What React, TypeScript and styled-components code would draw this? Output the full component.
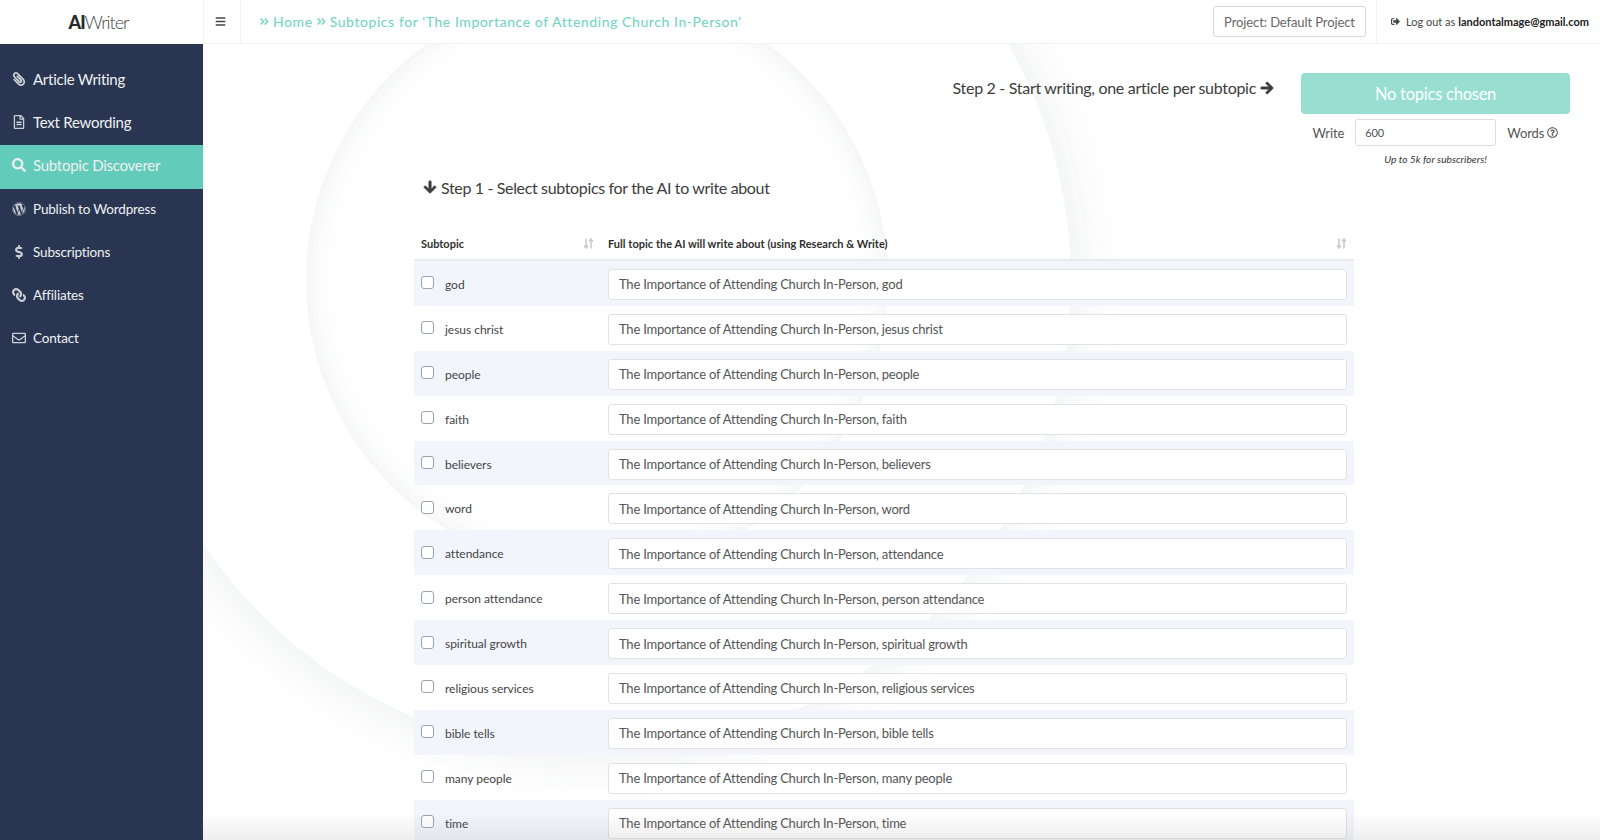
import React from "react";
import styled, { createGlobalStyle } from "styled-components";
import {
  FaPaperclip,
  FaRegFileAlt,
  FaSearch,
  FaWordpress,
  FaDollarSign,
  FaLink,
  FaRegEnvelope,
  FaBars,
  FaAngleDoubleRight,
  FaSignOutAlt,
  FaArrowRight,
  FaArrowDown,
  FaRegQuestionCircle,
} from "react-icons/fa";

const GlobalStyle = createGlobalStyle`
  html, body {
    margin: 0;
    height: 840px;
    overflow: hidden;
    background: #fff;
    font-family: Lato, "Liberation Sans", sans-serif;
    color: #3c3c3c;
  }
  * { box-sizing: border-box; }
`;

const Page = styled.div`
  position: relative;
  width: 1600px;
  height: 840px;
  overflow: hidden;
  display: grid;
  grid-template-columns: 203px 1fr;
  grid-template-rows: 44px 1fr;
`;

const Logo = styled.div`
  display: flex;
  align-items: center;
  justify-content: center;
  padding-right: 6px;
  background: #fff;
  font-size: 18px;
  letter-spacing: -1px;
  color: #444;
  font-weight: 300;
  b {
    font-weight: 900;
    color: #2b2b2b;
  }
`;

const TopBar = styled.header`
  position: relative;
  z-index: 2;
  display: flex;
  align-items: stretch;
  background: #fff;
  border-bottom: 1px solid #f1f2f3;
  border-left: 1px solid #f1f2f3;
`;

const MenuToggle = styled.div`
  width: 37px;
  display: flex;
  align-items: center;
  justify-content: center;
  padding-right: 3px;
  border-right: 1px solid #f1f2f3;
  color: #444;
  font-size: 11px;
`;

const Crumbs = styled.nav`
  flex: 1;
  display: flex;
  align-items: center;
  gap: 3px;
  padding-left: 18px;
  color: #6cd3bf;
  font-size: 14px;
  letter-spacing: 0.58px;
  svg {
    font-size: 11px;
    opacity: 0.85;
  }
`;

const ProjectButton = styled.div`
  align-self: center;
  height: 31px;
  width: 153px;
  margin-right: 10px;
  display: flex;
  align-items: center;
  justify-content: center;
  border: 1.5px solid #d8d8d8;
  border-radius: 3px;
  font-size: 13px;
  letter-spacing: -0.1px;
  color: #666;
`;

const Logout = styled.div`
  width: 224px;
  display: flex;
  align-items: center;
  gap: 6px;
  padding-left: 14px;
  border-left: 1px solid #f1f2f3;
  font-size: 11px;
  color: #444;
  white-space: nowrap;
  svg {
    font-size: 9px;
  }
  b {
    font-weight: 700;
    color: #222;
  }
`;

const Sidebar = styled.aside`
  background: #2a3651;
  padding-top: 15px;
  display: flex;
  flex-direction: column;
  position: relative;
  z-index: 1;
`;

const NavItem = styled.div<{ $active?: boolean; $small?: boolean; $flip?: boolean }>`
  height: 43.2px;
  display: flex;
  align-items: center;
  padding: 0 0 3px 12px;
  gap: 7px;
  color: #eef0f3;
  background: ${(p) => (p.$active ? "#62cbb9" : "transparent")};
  font-size: ${(p) => (p.$small ? "13.5px" : "15px")};
  letter-spacing: ${(p) => (p.$small ? "-0.17px" : "-0.26px")};
  svg {
    width: 14px;
    height: 14px;
    flex: none;
    opacity: ${(p) => (p.$active ? 1 : 0.82)};
    transform: ${(p) => (p.$flip ? "scaleX(-1)" : "none")};
  }
`;

const Main = styled.main`
  position: relative;
  overflow: hidden;
  padding: 29px 30px 0 211px;
`;

const Rings = styled.div`
  position: absolute;
  inset: 0;
  pointer-events: none;
`;

const OuterRing = styled.div`
  position: absolute;
  left: -80px;
  top: -238px;
  width: 948px;
  height: 948px;
  border-radius: 50%;
  background: #fff;
  box-shadow: 0 0 55px rgba(60, 70, 70, 0.1);
`;

const InnerRing = styled.div`
  position: absolute;
  left: 103px;
  top: -55px;
  width: 582px;
  height: 582px;
  border-radius: 50%;
  background: #fff;
  box-shadow: inset 0 0 32px rgba(60, 70, 70, 0.09);
`;

const BottomShade = styled.div`
  position: absolute;
  left: 203px;
  right: 0;
  bottom: 0;
  height: 28px;
  z-index: 3;
  pointer-events: none;
  background: linear-gradient(rgba(120, 120, 120, 0), rgba(120, 120, 120, 0.13));
`;

const Content = styled.div`
  position: relative;
`;

const WriteBar = styled.section`
  display: flex;
  justify-content: flex-end;
  align-items: flex-start;
  height: 103px;
`;

const StepTwo = styled.div`
  font-size: 16px;
  letter-spacing: -0.3px;
  margin-top: 5px;
  margin-right: 27px;
  display: flex;
  align-items: center;
  gap: 4px;
  white-space: nowrap;
  svg {
    font-size: 14px;
    stroke: currentColor;
    stroke-width: 30;
  }
`;

const WriteBox = styled.div`
  width: 269px;
  display: flex;
  flex-direction: column;
  align-items: center;
`;

const ChosenButton = styled.div`
  width: 100%;
  height: 41px;
  display: flex;
  align-items: center;
  justify-content: center;
  background: #98dfd2;
  color: #fff;
  border-radius: 4px;
  font-size: 16.5px;
  letter-spacing: -0.25px;
`;

const WordRow = styled.div`
  display: flex;
  align-items: center;
  margin-top: 5px;
  font-size: 13px;
  letter-spacing: -0.1px;
  color: #555;
`;

const WordInput = styled.div`
  width: 141px;
  height: 27px;
  margin: 0 11px;
  padding-left: 9px;
  display: flex;
  align-items: center;
  border: 1.5px solid #dcdcdf;
  border-radius: 3px;
  background: #fff;
  font-size: 11px;
`;

const Hint = styled.em`
  margin-top: 7px;
  font-size: 10.2px;
  color: #333;
`;

const StepOne = styled.h2`
  margin: 0;
  padding-left: 9px;
  font-size: 16px;
  font-weight: 400;
  letter-spacing: -0.35px;
  height: 22px;
  display: flex;
  align-items: center;
  gap: 4px;
  svg {
    font-size: 14px;
    stroke: currentColor;
    stroke-width: 30;
  }
`;

const TopicTable = styled.div`
  width: 940px;
  margin-top: 30px;
`;

const HeadRow = styled.div`
  display: grid;
  grid-template-columns: 194px 1fr;
  height: 33px;
  align-items: center;
  border-bottom: 2px solid #e8eaec;
  font-size: 11px;
  font-weight: 700;
  color: #2f2f2f;
`;

const HeadCell = styled.div`
  display: flex;
  align-items: center;
  justify-content: space-between;
  padding: 0 14px 0 7px;
  & + & {
    padding: 0 7px 0 0;
    letter-spacing: 0.03px;
  }
`;

const SortIcon = () => (
  <svg width="11" height="11" viewBox="0 0 11 11" fill="none" stroke="#c9cccf" strokeWidth="1.6">
    <path d="M3 0.5v9M1 7.5l2 2.5 2-2.5M8 10.5v-9M6 3.5l2-2.5 2 2.5" />
  </svg>
);

const TopicRow = styled.div<{ $odd: boolean }>`
  height: 44.9px;
  display: grid;
  grid-template-columns: 194px 1fr;
  align-items: center;
  background: ${(p) => (p.$odd ? "#f2f6fc" : "transparent")};
`;

const SubtopicCell = styled.label`
  display: flex;
  align-items: center;
  padding-left: 7px;
  gap: 11px;
  font-size: 12px;
  letter-spacing: -0.03px;
  color: #444;
  span {
    padding-top: 2px;
  }
`;

const Box = styled.i`
  width: 13px;
  height: 13px;
  margin-top: -1px;
  background: #fff;
  border: 1.5px solid #9aa3ad;
  border-radius: 3px;
`;

const TopicInput = styled.div`
  height: 31px;
  margin: 2px 7px 0 0;
  display: flex;
  align-items: center;
  padding-left: 10px;
  border: 1.5px solid #e1e2e4;
  border-radius: 3px;
  background: #fff;
  font-size: 13px;
  letter-spacing: -0.22px;
  color: #555;
`;

const navItems = [
  { label: "Article Writing", Icon: FaPaperclip, flip: true },
  { label: "Text Rewording", Icon: FaRegFileAlt },
  { label: "Subtopic Discoverer", Icon: FaSearch, active: true },
  { label: "Publish to Wordpress", Icon: FaWordpress, small: true },
  { label: "Subscriptions", Icon: FaDollarSign, small: true },
  { label: "Affiliates", Icon: FaLink, small: true, flip: true },
  { label: "Contact", Icon: FaRegEnvelope, small: true },
];

const subtopics = [
  "god",
  "jesus christ",
  "people",
  "faith",
  "believers",
  "word",
  "attendance",
  "person attendance",
  "spiritual growth",
  "religious services",
  "bible tells",
  "many people",
  "time",
];

const App: React.FC = () => {
  return (
    <Page>
      <GlobalStyle />
      <Logo>
        <b>AI</b>Writer
      </Logo>
      <TopBar>
        <MenuToggle>
          <FaBars />
        </MenuToggle>
        <Crumbs>
          <FaAngleDoubleRight /> Home <FaAngleDoubleRight /> Subtopics for 'The Importance of Attending Church In-Person'
        </Crumbs>
        <ProjectButton>Project: Default Project</ProjectButton>
        <Logout>
          <FaSignOutAlt />
          <span>
            Log out as <b>landontalmage@gmail.com</b>
          </span>
        </Logout>
      </TopBar>
      <Sidebar>
        {navItems.map(({ label, Icon, active, small, flip }) => (
          <NavItem key={label} $active={active} $small={small} $flip={flip}>
            <Icon />
            {label}
          </NavItem>
        ))}
      </Sidebar>
      <Main>
        <Rings>
          <OuterRing />
          <InnerRing />
        </Rings>
        <Content>
          <WriteBar>
            <StepTwo>
              Step 2 - Start writing, one article per subtopic <FaArrowRight />
            </StepTwo>
            <WriteBox>
              <ChosenButton>No topics chosen</ChosenButton>
              <WordRow>
                Write
                <WordInput>600</WordInput>
                Words&nbsp;
                <FaRegQuestionCircle size={11} />
              </WordRow>
              <Hint>Up to 5k for subscribers!</Hint>
            </WriteBox>
          </WriteBar>
          <StepOne>
            <FaArrowDown /> Step 1 - Select subtopics for the AI to write about
          </StepOne>
          <TopicTable>
            <HeadRow>
              <HeadCell>
                Subtopic <SortIcon />
              </HeadCell>
              <HeadCell>
                Full topic the AI will write about (using Research &amp; Write) <SortIcon />
              </HeadCell>
            </HeadRow>
            {subtopics.map((topic, i) => (
              <TopicRow key={topic} $odd={i % 2 === 0}>
                <SubtopicCell>
                  <Box />
                  <span>{topic}</span>
                </SubtopicCell>
                <TopicInput>The Importance of Attending Church In-Person, {topic}</TopicInput>
              </TopicRow>
            ))}
          </TopicTable>
        </Content>
      </Main>
      <BottomShade />
    </Page>
  );
};

export default App;
